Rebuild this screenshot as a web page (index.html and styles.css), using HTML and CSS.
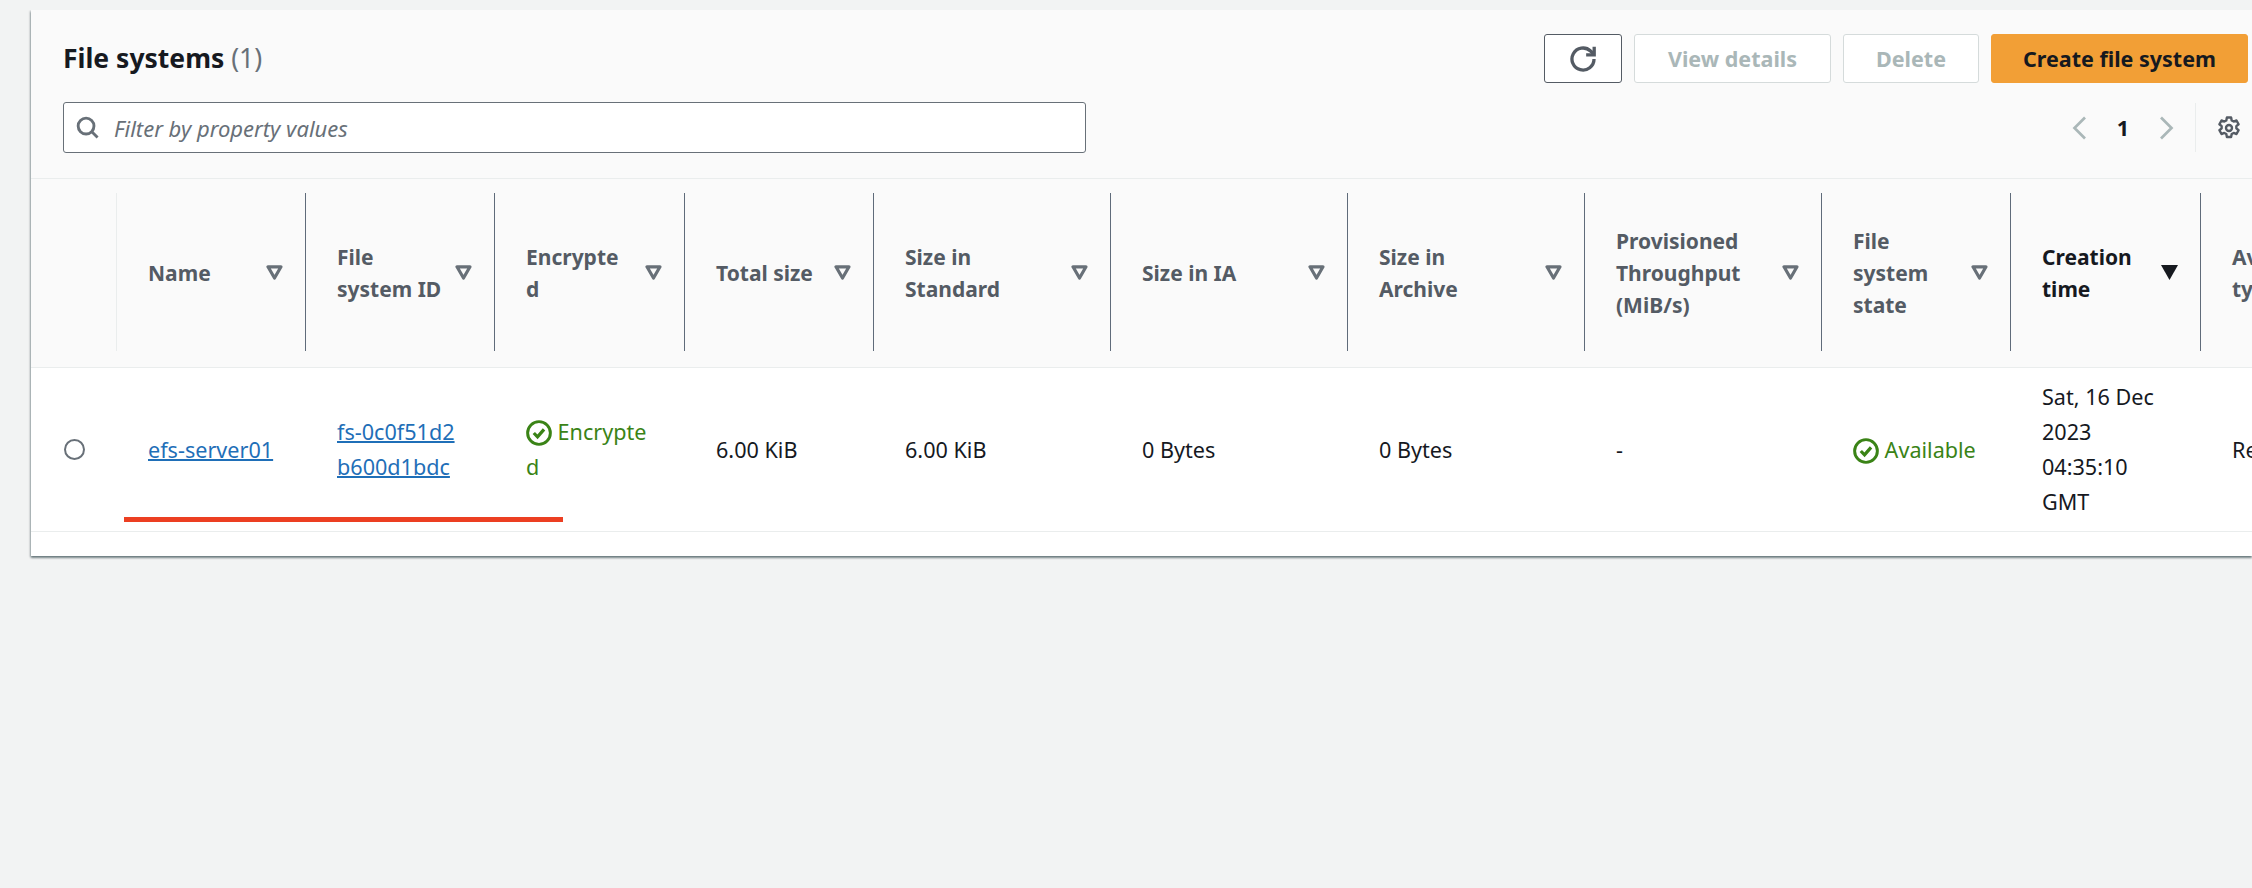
FILE: index.html
```html
<!DOCTYPE html>
<html>
<head>
	<meta charset="UTF-8">
	<title>File systems</title>
	<link rel="stylesheet" href="styles.css">
</head>
<body>
<svg class="defs" width="0" height="0">
	<symbol id="caret" viewBox="0 0 17 15"><path d="M2 1.800h13L8.500 13z" fill="none" stroke="currentColor" stroke-width="3.200" stroke-linejoin="round"/></symbol>
	<symbol id="caret-on" viewBox="0 0 17 15"><path d="M0 0h17L8.500 15z" fill="currentColor"/></symbol>
	<symbol id="ok" viewBox="0 0 16 16"><circle cx="8" cy="8" r="7" fill="none" stroke="currentColor" stroke-width="1.800"/><path d="M4.800 8l2.300 2.400 4-4.600" fill="none" stroke="currentColor" stroke-width="2"/></symbol>
</svg>

<div class="card">
	<div class="head">
		<div class="head-row">
			<h1 class="title">File systems <span class="count">(1)</span></h1>
			<div class="actions">
				<button class="btn btn-icon">
					<svg width="28" height="28" viewBox="0 0 16 16"><path d="M14.300 8a6.300 6.300 0 1 1-2-4.600L14 5" fill="none" stroke="#545b64" stroke-width="1.900"/><path d="M14.400 1v4.600H9.800" fill="none" stroke="#545b64" stroke-width="1.900"/></svg>
				</button>
				<button class="btn btn-off btn-view">View details</button>
				<button class="btn btn-off btn-del">Delete</button>
				<button class="btn btn-main">Create file system</button>
			</div>
		</div>
		<div class="head-row">
			<div class="search">
				<svg width="23" height="23" viewBox="0 0 16 16"><circle cx="7" cy="7" r="5.500" fill="none" stroke="#687078" stroke-width="2"/><path d="M11 11l4 4" stroke="#687078" stroke-width="2"/></svg>
				<span class="placeholder">Filter by property values</span>
			</div>
			<div class="pager">
				<svg class="chev" width="18" height="24" viewBox="0 0 12 16"><path d="M10 1L3 8l7 7" fill="none" stroke="#aab7b8" stroke-width="1.800"/></svg>
				<span class="page-no">1</span>
				<svg class="chev" width="18" height="24" viewBox="0 0 12 16"><path d="M2 1l7 7-7 7" fill="none" stroke="#aab7b8" stroke-width="1.800"/></svg>
				<div class="gear-wrap">
					<svg width="24" height="24" viewBox="0 0 16 16"><path d="M6.600 1h2.800l.4 2 1.300.7 1.900-.7 1.400 2.500-1.500 1.300v1.400l1.500 1.300-1.400 2.500-1.900-.7-1.300.7-.4 2H6.600l-.4-2-1.300-.7-1.900.7-1.400-2.500 1.500-1.300V6.800L1.600 5.500 3 3l1.900.7 1.300-.7z" fill="none" stroke="#545b64" stroke-width="1.600" stroke-linejoin="round"/><circle cx="8" cy="8" r="2" fill="none" stroke="#545b64" stroke-width="1.600"/></svg>
				</div>
			</div>
		</div>
	</div>

	<table class="list">
		<colgroup>
			<col class="c-radio"><col class="c-189"><col class="c-189"><col class="c-190"><col class="c-189">
			<col class="c-237"><col class="c-237"><col class="c-237"><col class="c-237"><col class="c-189"><col class="c-190"><col class="c-189">
		</colgroup>
		<thead>
			<tr>
				<th></th>
				<th><div class="th first"><span class="th-text">Name</span><svg class="caret"><use href="#caret"/></svg></div></th>
				<th><div class="th"><span class="th-text">File<br>system ID</span><svg class="caret"><use href="#caret"/></svg></div></th>
				<th><div class="th"><span class="th-text">Encrypte<br>d</span><svg class="caret"><use href="#caret"/></svg></div></th>
				<th><div class="th"><span class="th-text">Total size</span><svg class="caret"><use href="#caret"/></svg></div></th>
				<th><div class="th"><span class="th-text">Size in<br>Standard</span><svg class="caret"><use href="#caret"/></svg></div></th>
				<th><div class="th"><span class="th-text">Size in IA</span><svg class="caret"><use href="#caret"/></svg></div></th>
				<th><div class="th"><span class="th-text">Size in<br>Archive</span><svg class="caret"><use href="#caret"/></svg></div></th>
				<th><div class="th"><span class="th-text">Provisioned<br>Throughput<br>(MiB/s)</span><svg class="caret"><use href="#caret"/></svg></div></th>
				<th><div class="th"><span class="th-text">File<br>system<br>state</span><svg class="caret"><use href="#caret"/></svg></div></th>
				<th><div class="th sorted"><span class="th-text">Creation<br>time</span><svg class="caret"><use href="#caret-on"/></svg></div></th>
				<th><div class="th"><span class="th-text">Av<br>ty</span></div></th>
			</tr>
		</thead>
		<tbody>
			<tr>
				<td class="radio-cell"><span class="radio"></span></td>
				<td><a class="link" href="#">efs-server01</a></td>
				<td><a class="link" href="#">fs-0c0f51d2<br>b600d1bdc</a></td>
				<td class="good"><svg class="ok"><use href="#ok"/></svg> Encrypte<br>d</td>
				<td>6.00 KiB</td>
				<td>6.00 KiB</td>
				<td>0 Bytes</td>
				<td>0 Bytes</td>
				<td>-</td>
				<td class="good"><svg class="ok"><use href="#ok"/></svg> Available</td>
				<td>Sat, 16 Dec<br>2023<br>04:35:10<br>GMT</td>
				<td>Re</td>
			</tr>
		</tbody>
	</table>
	<div class="foot"></div>
	<div class="redline"></div>
</div>
</body>
</html>
```

FILE: styles.css
```css
*{margin:0;padding:0;box-sizing:border-box;}
html,body{height:100%;overflow:hidden;}
body{
	background:#f2f3f3;
	font-family:"Noto Sans","Liberation Sans",sans-serif;
	font-size:21.6px;
	color:#16191f;
}
.defs{position:absolute;}

.card{
	position:relative;
	width:calc(100% - 31px);
	margin:10px 0 0 31px;
	background:#fff;
	box-shadow:0 2px 2px rgba(0,28,36,.45),-1px 1px 2px rgba(0,28,36,.25);
	clip-path:inset(0 0 -6px -6px);
}

/* top bar */
.head{
	height:169px;
	padding:24px 4px 0 32px;
	background:#fafafa;
	border-bottom:1px solid #eaeded;
}
.head-row{display:flex;justify-content:space-between;align-items:center;}
.head-row + .head-row{margin-top:19px;}
.title{font-size:26.500px;line-height:49px;font-weight:700;}
.count{font-weight:400;color:#687078;}
.actions{display:flex;gap:12px;}
.btn{
	height:49px;
	border-radius:3px;
	background:#fff;
	border:1px solid #545b64;
	font:700 21.500px "Noto Sans","Liberation Sans",sans-serif;
	display:flex;
	align-items:center;
	justify-content:center;
}
.btn-icon{width:78px;}
.btn-off{border-color:#d5dbdb;color:#aab7b8;}
.btn-view{width:197px;}
.btn-del{width:136px;}
.btn-main{width:257px;background:#f29f36;border-color:#f29f36;color:#16191f;}

.search{
	width:1023px;
	height:51px;
	display:flex;
	align-items:center;
	gap:15px;
	padding-left:12px;
	background:#fff;
	border:1px solid #687078;
	border-radius:3px;
}
.placeholder{font-size:22px;font-style:italic;color:#687078;}
.pager{display:flex;align-items:center;height:51px;}
.chev{display:block;}
.page-no{width:70px;text-align:center;font-weight:700;}
.gear-wrap{
	display:flex;
	align-items:center;
	height:49px;
	margin-left:19px;
	padding:0 7px 0 21px;
	border-left:1px solid #eaeded;
}

/* table */
.list{border-collapse:collapse;table-layout:fixed;width:2358px;}
.c-radio{width:85px;}
.c-189{width:189px;}
.c-190{width:190px;}
.c-237{width:237px;}
th{
	height:188px;
	padding:14px 0 15px;
	background:#fafafa;
	border-bottom:1px solid #eaeded;
	text-align:left;
	font-size:21px;
	font-weight:700;
	color:#545b64;
	line-height:32px;
}
.th{
	display:flex;
	align-items:center;
	justify-content:space-between;
	height:158px;
	padding:0 22px 0 31px;
	border-left:1px solid #5f6b7a;
}
.th-text{padding-top:2px;}
.th.first{border-left-color:#eaeded;}
.th.sorted{color:#16191f;}
.caret{width:17px;height:15px;color:#687078;flex:none;}
.sorted .caret{color:#16191f;}

td{
	height:164px;
	padding:0 0 0 32px;
	border-bottom:1px solid #eaeded;
	line-height:35px;
	vertical-align:middle;
}
.radio-cell{padding-left:33px;}
.radio{
	display:block;
	width:21px;
	height:21px;
	border:2px solid #687078;
	border-radius:50%;
}
.link{color:#1f6fb8;text-decoration:underline;text-decoration-thickness:2px;}
.good{color:#3a8316;}
.ok{width:26px;height:26px;vertical-align:-6px;}
.foot{height:24px;background:#fff;}

/* annotation drawn over the row */
.redline{
	position:absolute;
	left:93px;
	top:507px;
	width:439px;
	height:5px;
	background:#ec3f22;
}
```
